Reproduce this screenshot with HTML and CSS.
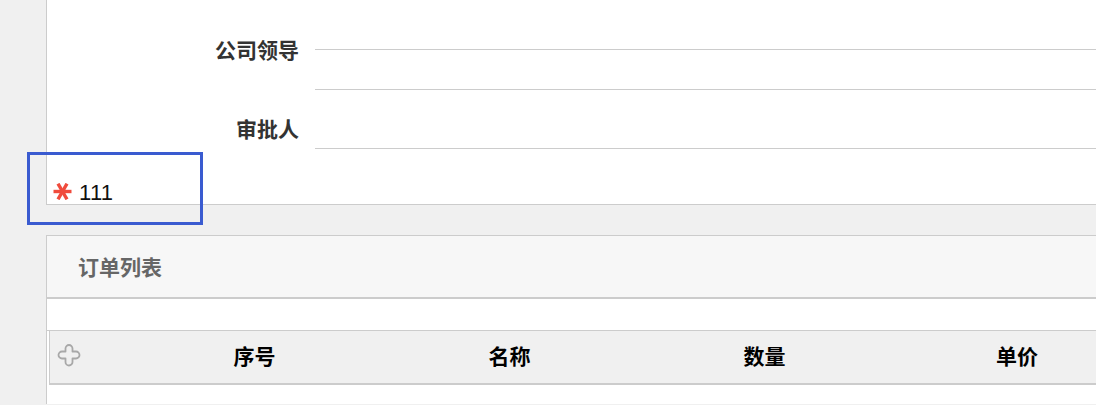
FILE: index.html
```html
<!DOCTYPE html>
<html lang="zh-CN">
<head>
<meta charset="utf-8">
<title>表单</title>
<link rel="stylesheet" href="styles.css">
</head>
<body>
<div class="page">
  <section class="panel form-panel">
    <div class="row r1"><div class="label"></div><div class="field"></div></div>
    <div class="row r2"><div class="label lift">公司领导</div><div class="field"></div></div>
    <div class="row r3"><div class="label drop">审批人</div><div class="field"></div></div>
    <div class="req">
      <svg class="star" width="19" height="17" viewBox="0 0 19 17" aria-hidden="true">
        <g stroke="#f04b3c" stroke-width="3.4" stroke-linecap="butt">
          <line x1="0.5" y1="8.5" x2="18.5" y2="8.5"/>
          <line x1="5" y1="0.7" x2="14" y2="16.3"/>
          <line x1="5" y1="16.3" x2="14" y2="0.7"/>
        </g>
      </svg><span class="req-text">111</span>
    </div>
  </section>

  <section class="panel list-panel">
    <div class="list-head">订单列表</div>
    <div class="list-gap"></div>
    <div class="thead">
      <div class="th th-add">
        <svg width="24" height="23" viewBox="0 0 24 23" aria-hidden="true">
          <path d="M8.5 7.5V4.5a3.5 3.5 0 0 1 7 0V7.5H19a3.5 3.5 0 0 1 0 7H15.5V18a3.5 3.5 0 0 1-7 0V14.5H5a3.5 3.5 0 0 1 0-7Z" fill="none" stroke="#a8a8a8" stroke-width="1.8" stroke-linejoin="round"/>
        </svg>
      </div>
      <div class="th">序号</div>
      <div class="th">名称</div>
      <div class="th">数量</div>
      <div class="th">单价</div>
    </div>
  </section>
</div>
<div class="highlight"></div>
</body>
</html>
```

FILE: styles.css
```css
html, body {
  margin: 0;
  padding: 0;
}
body {
  background: #f0f0f0;
  font-family: "Liberation Sans", "Noto Sans CJK SC", sans-serif;
  width: 1096px;
  height: 405px;
  overflow: hidden;
  position: relative;
}
.page {
  padding-left: 46px;
}
.panel {
  background: #fff;
  border-left: 1px solid #cccccc;
  overflow: hidden;
}
.form-panel {
  border-bottom: 1px solid #cccccc;
}
.row {
  display: flex;
  align-items: flex-start;
}
.label {
  width: 252px;
  padding-right: 16px;
  text-align: right;
  font-size: 21px;
  font-weight: bold;
  color: #333;
  line-height: 24px;
  flex: none;
}
.field {
  flex: 1;
  border-bottom: 1px solid #cccccc;
}
.r1 .field { height: 49px; }
.r2 .field { height: 39px; }
.r3 .field { height: 58px; }
.lift { margin-top: -11px; }
.drop { padding-top: 28px; }

.req {
  margin-top: 33px;
  padding-left: 6px;
  height: 22px;
  line-height: 22px;
  font-size: 22px;
  color: #111;
  display: flex;
  align-items: center;
}
.star {
  display: block;
  margin-top: -4px;
  margin-right: 7px;
}
.req-text {
  display: block;
  letter-spacing: 0.3px;
}

.list-panel {
  margin-top: 30px;
  border-top: 1px solid #cccccc;
  height: 168px;
}
.list-head {
  height: 59px;
  line-height: 59px;
  padding-top: 2px;
  background: #f7f7f7;
  border-bottom: 2px solid #cccccc;
  padding-left: 31px;
  font-size: 21px;
  font-weight: bold;
  color: #666;
}
.list-gap {
  height: 31px;
  border-bottom: 1px solid #cccccc;
}
.thead {
  display: grid;
  grid-template-columns: 77px 255px 255px 255px 1fr;
  margin-left: 2px;
  border-left: 1px solid #cccccc;
  background: #f0f0f0;
  border-bottom: 2px solid #cccccc;
  height: 52px;
}
.th {
  line-height: 52px;
  text-align: center;
  font-size: 21px;
  font-weight: bold;
  color: #000;
}
.th:last-child {
  text-align: left;
  padding-left: 104px;
}
.th-add {
  display: flex;
  align-items: center;
  padding-left: 7px;
  padding-bottom: 3px;
}
.th-add svg {
  display: block;
}
.highlight {
  position: absolute;
  left: 27px;
  top: 152px;
  width: 170px;
  height: 67px;
  border: 3px solid #3a5bd0;
}
```
